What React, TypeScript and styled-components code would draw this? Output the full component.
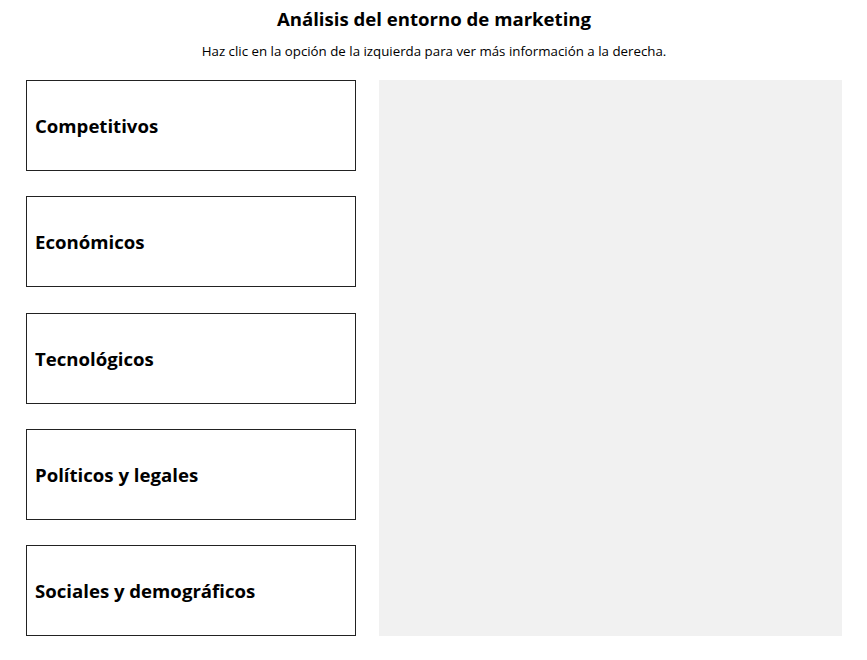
import React, { useState } from 'react'
import styled, { createGlobalStyle } from 'styled-components'

const GlobalStyle = createGlobalStyle`
  body {
    margin: 0;
    font-family: "Open Sans", "Liberation Sans", sans-serif;
    color: #000;
    background: #fff;
  }
`

const options = [
  'Competitivos',
  'Económicos',
  'Tecnológicos',
  'Políticos y legales',
  'Sociales y demográficos',
]

export default function App() {
  const [selected, setSelected] = useState<number | null>(null)

  return (
    <>
      <GlobalStyle />
      <Page>
        <Title>Análisis del entorno de marketing</Title>
        <Subtitle>Haz clic en la opción de la izquierda para ver más información a la derecha.</Subtitle>
        <Columns>
          <OptionList>
            {options.map((label, i) => (
              <OptionBox key={label} $active={selected === i} onClick={() => setSelected(i)}>
                {label}
              </OptionBox>
            ))}
          </OptionList>
          <InfoPanel />
        </Columns>
      </Page>
    </>
  )
}

const Page = styled.div`
  width: 867px;
  padding: 6px 25px 0 26px;
  box-sizing: border-box;
`

const Title = styled.h1`
  margin: 0;
  text-align: center;
  font-size: 18.6px;
  font-weight: 700;
  line-height: 26px;
`

const Subtitle = styled.p`
  margin: 10px 0 0;
  text-align: center;
  font-size: 13.3px;
  line-height: 18px;
`

const Columns = styled.div`
  display: flex;
  gap: 23px;
  margin-top: 20px;
`

const OptionList = styled.div`
  display: flex;
  flex-direction: column;
  gap: 25.25px;
  width: 330px;
  flex-shrink: 0;
`

const OptionBox = styled.button<{ $active: boolean }>`
  display: flex;
  align-items: center;
  height: 91px;
  padding: 0 0 0 8px;
  border: 1px solid #222;
  background: ${(p) => (p.$active ? '#f1f1f1' : '#fff')};
  font-family: inherit;
  font-size: 18.6px;
  font-weight: 700;
  color: #000;
  text-align: left;
  cursor: pointer;
`

const InfoPanel = styled.div`
  width: 463px;
  height: 556px;
  background: #f1f1f1;
`
